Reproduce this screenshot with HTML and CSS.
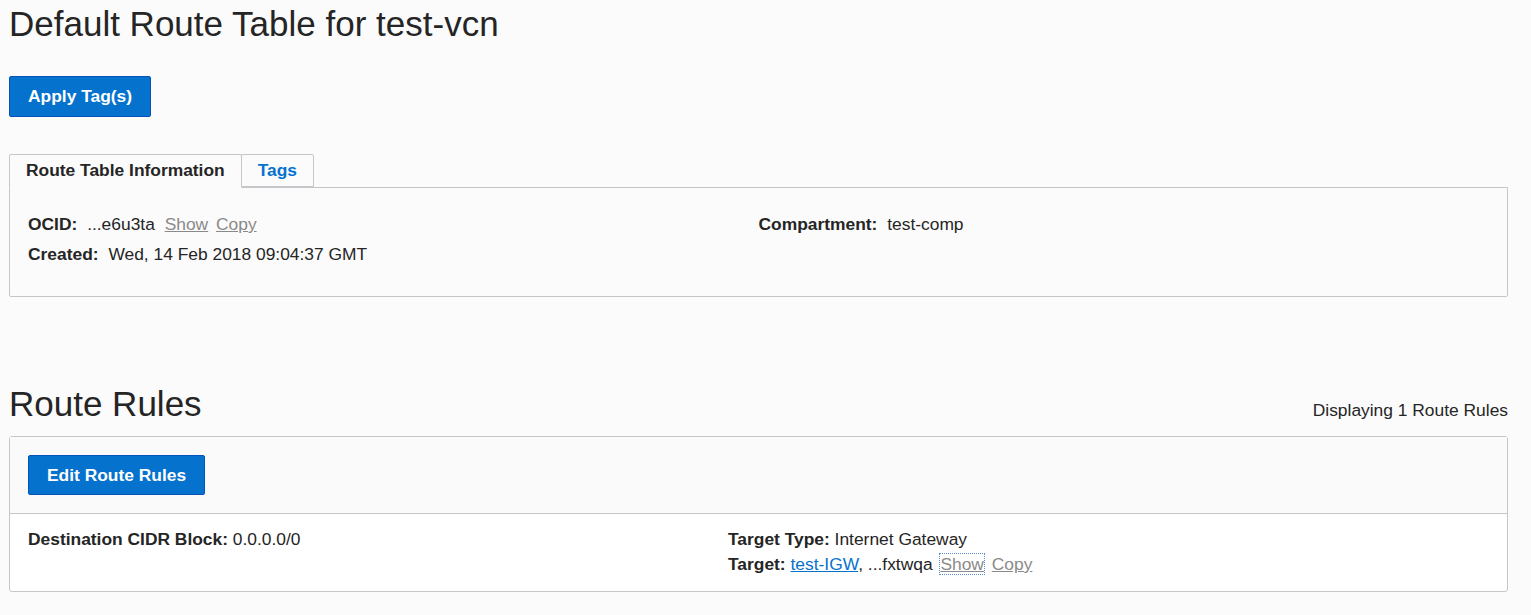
FILE: index.html
```html
<!DOCTYPE html>
<html lang="en">
<head>
    <meta charset="UTF-8">
    <title>Default Route Table for test-vcn</title>
    <link rel="stylesheet" href="styles.css">
</head>
<body>
    <h1 class="page-title">Default Route Table for test-vcn</h1>
    <div class="actions">
        <button class="btn">Apply Tag(s)</button>
    </div>

    <div class="tabs">
        <div class="tab active">Route Table Information</div>
        <div class="tab">Tags</div>
    </div>
    <div class="tab-panel">
        <div class="info-grid">
            <div class="info-col">
                <div class="info-row">
                    <span class="label">OCID:</span>
                    <span class="value">...e6u3ta</span>
                    <a class="mini-link" href="#">Show</a>
                    <a class="mini-link" href="#">Copy</a>
                </div>
                <div class="info-row">
                    <span class="label">Created:</span>
                    <span class="value">Wed, 14 Feb 2018 09:04:37 GMT</span>
                </div>
            </div>
            <div class="info-col">
                <div class="info-row">
                    <span class="label">Compartment:</span>
                    <span class="value">test-comp</span>
                </div>
            </div>
        </div>
    </div>

    <div class="section-head">
        <h2 class="section-title">Route Rules</h2>
        <div class="count">Displaying 1 Route Rules</div>
    </div>
    <div class="rules">
        <div class="rules-toolbar">
            <button class="btn btn-wide">Edit Route Rules</button>
        </div>
        <div class="rule">
            <div class="rule-col">
                <div class="rule-row"><b>Destination CIDR Block:</b> 0.0.0.0/0</div>
            </div>
            <div class="rule-col">
                <div class="rule-row"><b>Target Type:</b> Internet Gateway</div>
                <div class="rule-row"><b>Target:</b> <a class="link" href="#">test-IGW</a>, ...fxtwqa <a class="mini-link focused" href="#">Show</a> <a class="mini-link" href="#">Copy</a></div>
            </div>
        </div>
    </div>
</body>
</html>
```

FILE: styles.css
```css
body {
    font-family: "Liberation Sans", Arial, sans-serif;
    background-color: #fbfbfb;
    color: #252525;
    margin: 0;
    padding: 0 23px 0 9px;
    font-size: 17.4px;
}
.page-title {
    font-size: 35px;
    font-weight: normal;
    margin: 0;
    padding-top: 5px;
    line-height: 38px;
}
.actions {
    margin-top: 33px;
}
.btn {
    font-family: inherit;
    font-size: 17.4px;
    font-weight: bold;
    color: white;
    background-color: #0572ce;
    border: 1px solid #0553b8;
    border-radius: 2px;
    height: 41px;
    padding: 0 18px;
    cursor: pointer;
}
.btn-wide {
    height: 40px;
}
.tabs {
    display: flex;
    margin-top: 37px;
    position: relative;
    z-index: 1;
}
.tab {
    height: 31px;
    line-height: 31px;
    padding: 0 16px;
    border: 1px solid #c4c6ca;
    border-radius: 2px 2px 0 0;
    font-size: 17.4px;
    font-weight: bold;
    color: #0572ce;
    background-color: #fbfbfb;
}
.tab.active {
    color: #252525;
    border-bottom-color: #fbfbfb;
    height: 32px;
}
.tab + .tab {
    margin-left: -1px;
    align-self: flex-start;
}
.tab-panel {
    border: 1px solid #c4c6ca;
    border-radius: 0 0 2px 2px;
    margin-top: -1px;
    padding: 21px 18px 29px;
    height: 58px;
}
.info-grid {
    display: grid;
    grid-template-columns: 1fr 1fr;
}
.info-row {
    height: 30px;
    line-height: 30px;
}
.label {
    font-weight: bold;
    margin-right: 5px;
}
.value {
    margin-right: 5px;
}
.mini-link {
    color: #8a8a8a;
    text-decoration: underline;
    margin-right: 3px;
}
.mini-link.focused {
    outline: 1px dotted #5a8fd6;
    margin-left: 3px;
}
.link {
    color: #0572ce;
}
.section-head {
    display: flex;
    justify-content: space-between;
    align-items: baseline;
    margin-top: 87px;
}
.section-title {
    font-size: 35px;
    font-weight: normal;
    margin: 0;
    line-height: 40px;
}
.count {
    font-size: 17.4px;
}
.rules {
    margin-top: 12px;
    border: 1px solid #c4c6ca;
    border-radius: 3px;
    background-color: white;
}
.rules-toolbar {
    background-color: #fafafa;
    border-bottom: 1px solid #c4c6ca;
    padding: 18px 18px 18px;
}
.rule {
    display: grid;
    grid-template-columns: 700px 1fr;
    padding: 13px 18px 16px;
    height: 48px;
}
.rule-row {
    line-height: 25px;
}
.rule-row b {
    font-weight: bold;
}
```
